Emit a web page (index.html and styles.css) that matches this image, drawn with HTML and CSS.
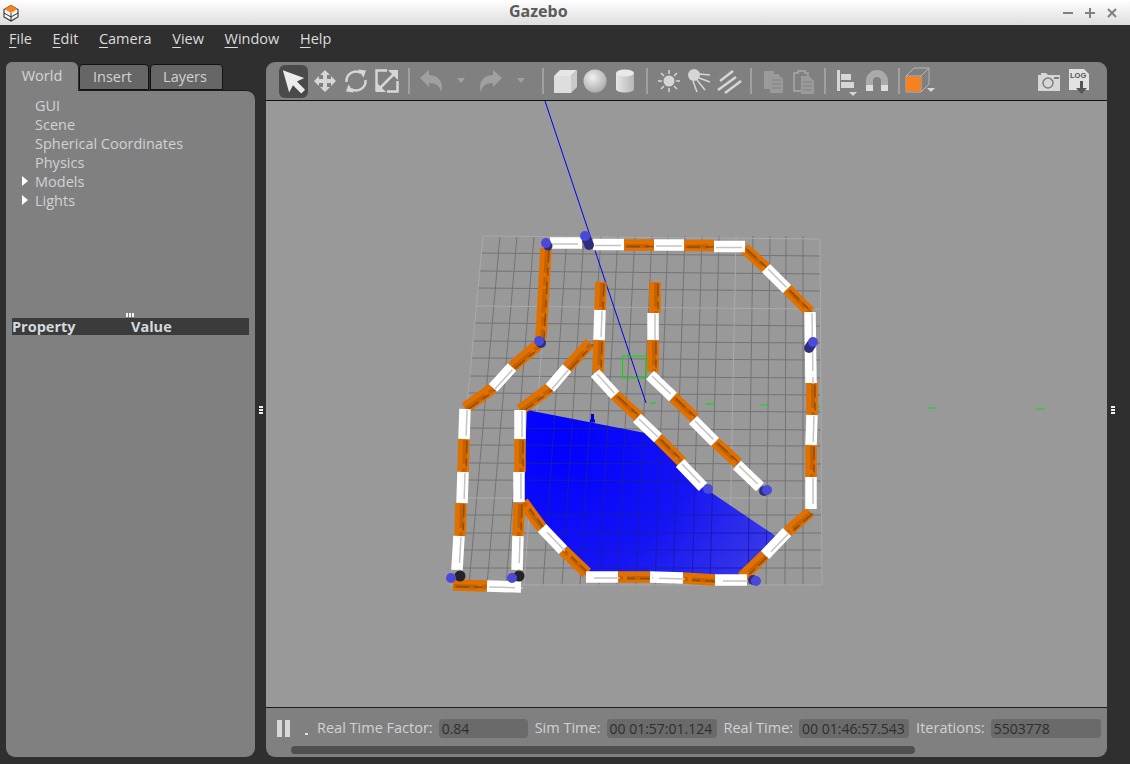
FILE: index.html
```html
<!DOCTYPE html>
<html lang="en">
<head>
  <meta charset="UTF-8">
  <title>Gazebo</title>
  <link rel="stylesheet" href="styles.css">
</head>
<body>

<header class="titlebar">
  <svg class="app-logo" width="18" height="18" viewBox="0 0 18 18">
    <path d="M9 1.5L16 5.5V13L9 17L2 13V5.5Z" fill="#f4f4f4" stroke="#333" stroke-width="1.1"/>
    <path d="M9 1L15.5 5L9 9L2.5 5Z" fill="#f5821f"/>
    <path d="M2 9L9 13L16 9M9 9V17" fill="none" stroke="#333" stroke-width="1"/>
  </svg>
  <span class="app-title">Gazebo</span>
  <div class="win-buttons">
    <svg width="14" height="14" viewBox="0 0 14 14"><path d="M2 7H12" class="win-stroke"/></svg>
    <svg width="14" height="14" viewBox="0 0 14 14"><path d="M2 7H12M7 2V12" class="win-stroke"/></svg>
    <svg width="14" height="14" viewBox="0 0 14 14"><path d="M3 3L11 11M11 3L3 11" class="win-stroke"/></svg>
  </div>
</header>

<nav class="menubar">
  <span class="menu-item"><u>F</u>ile</span>
  <span class="menu-item"><u>E</u>dit</span>
  <span class="menu-item"><u>C</u>amera</span>
  <span class="menu-item"><u>V</u>iew</span>
  <span class="menu-item"><u>W</u>indow</span>
  <span class="menu-item"><u>H</u>elp</span>
</nav>

<main class="workspace">

  <!-- left panel -->
  <section class="side">
    <div class="tabs">
      <div class="tab active">World</div>
      <div class="tab">Insert</div>
      <div class="tab">Layers</div>
    </div>
    <div class="side-body">
      <ul class="tree">
        <li>GUI</li>
        <li>Scene</li>
        <li>Spherical Coordinates</li>
        <li>Physics</li>
        <li class="closed">Models</li>
        <li class="closed">Lights</li>
      </ul>
      <div class="hgrip"><i></i><i></i><i></i></div>
      <div class="prop-head"><span class="prop-name">Property</span><span>Value</span></div>
    </div>
  </section>

  <div class="vsplit"><div class="vgrip"><i></i><i></i><i></i></div></div>

  <!-- main view -->
  <section class="view">
    <div class="toolbar">
      <div class="tool wide selected">
        <svg width="30" height="30" viewBox="0 0 30 30"><path class="ic-bright" d="M4 4L26 12L18.500 15.500L27 24L23 28L14.500 19.500L10.500 27Z"/></svg>
      </div>
      <div class="tool wide">
        <svg width="30" height="30" viewBox="0 0 30 30"><path class="ic" d="M15 4l5 5h-3v4h4v-3l5 5-5 5v-3h-4v4h3l-5 5-5-5h3v-4H9v3l-5-5 5-5v3h4V9h-3z"/></svg>
      </div>
      <div class="tool wide">
        <svg width="30" height="30" viewBox="0 0 30 30"><path class="ic-line" d="M5.500 16A9.500 9.500 0 0 1 20 7M24.500 14A9.500 9.500 0 0 1 10 23"/><path class="ic" d="M17 3.500L25 4.500L22.500 11.500ZM13 26.500L5 25.500L7.500 18.500Z"/></svg>
      </div>
      <div class="tool wide">
        <svg width="30" height="30" viewBox="0 0 30 30"><path class="ic-line" d="M15 4.500H4.500V25.500M15 25.500H25.500V15M8 22L22 8"/><path class="ic" d="M16 4H26V14ZM14 26H4V16Z"/></svg>
      </div>
      <div class="sep"></div>
      <div class="tool">
        <svg width="30" height="30" viewBox="0 0 30 30"><path class="ic-off" d="M4 12L13 4V9C21 9 26 14 26 21C26 23 25.500 24.500 25 26C24 20 20 17 13 17V21Z"/></svg>
      </div>
      <div class="tool"><svg width="10" height="6" viewBox="0 0 10 6"><path class="ic-off" d="M1 0H9L5 5Z"/></svg></div>
      <div class="tool">
        <svg width="30" height="30" viewBox="0 0 30 30"><path class="ic-off" d="M26 12L17 4V9C9 9 4 14 4 21C4 23 4.500 24.500 5 26C6 20 10 17 17 17V21Z"/></svg>
      </div>
      <div class="tool"><svg width="10" height="6" viewBox="0 0 10 6"><path class="ic-off" d="M1 0H9L5 5Z"/></svg></div>
      <div class="sep"></div>
      <div class="tool">
        <svg width="30" height="30" viewBox="0 0 30 30"><path fill="#dedede" d="M4 10H21V27H4Z"/><path fill="#e6e6e6" d="M4 10L10 4H27L21 10Z"/><path fill="#cacaca" d="M21 10L27 4V21L21 27Z"/></svg>
      </div>
      <div class="tool">
        <svg width="30" height="30" viewBox="0 0 30 30">
          <defs><radialGradient id="ball" cx=".4" cy=".35" r=".7"><stop offset="0" stop-color="#f0f0f0"/><stop offset="1" stop-color="#a9a9a9"/></radialGradient></defs>
          <circle cx="15" cy="15" r="11.500" fill="url(#ball)"/>
        </svg>
      </div>
      <div class="tool">
        <svg width="30" height="30" viewBox="0 0 30 30">
          <defs><linearGradient id="can"><stop offset="0" stop-color="#e6e6e6"/><stop offset="1" stop-color="#b6b6b6"/></linearGradient></defs>
          <path fill="url(#can)" d="M6 7V23C6 25 10 26.500 15 26.500S24 25 24 23V7Z"/>
          <ellipse cx="15" cy="7" rx="9" ry="3.500" fill="#e9e9e9"/>
        </svg>
      </div>
      <div class="sep"></div>
      <div class="tool">
        <svg width="30" height="30" viewBox="0 0 30 30"><circle class="ic" cx="15" cy="15" r="5.500"/><path class="ic-thin" d="M15 4V8M15 22V26M4 15H8M22 15H26M7 7L10 10M20 20L23 23M23 7L20 10M10 20L7 23"/></svg>
      </div>
      <div class="tool">
        <svg width="30" height="30" viewBox="0 0 30 30"><circle class="ic" cx="10" cy="9" r="6"/><path class="ic-thin" d="M15 8L26 9M15 12L26 16M13 14L21 24M9 15L13 26"/></svg>
      </div>
      <div class="tool">
        <svg width="30" height="30" viewBox="0 0 30 30"><path class="ic-line" d="M6 15L19 5M4 24L22 11M11 27L27 15"/></svg>
      </div>
      <div class="sep"></div>
      <div class="tool">
        <svg width="30" height="30" viewBox="0 0 30 30"><path class="ic-dim" d="M6 5H16V8H20L25 13V27H12V23H6Z"/><path class="ic-dimline" d="M14 14H23M14 18H23M14 22H23"/></svg>
      </div>
      <div class="tool">
        <svg width="30" height="30" viewBox="0 0 30 30"><path class="ic-dimoutline" d="M6 7H10V5H17V7H20V25H6Z"/><path class="ic-dim" d="M13 10H21L26 15V28H13Z"/><path class="ic-dimline" d="M15 16H24M15 20H24M15 24H24"/></svg>
      </div>
      <div class="sep"></div>
      <div class="tool">
        <svg width="30" height="30" viewBox="0 0 30 30"><path class="ic" d="M5 4H8V25H5ZM9 8H19V14H9ZM9 16H22V22H9Z"/><path class="ic" d="M17 26H25L21 30Z"/></svg>
      </div>
      <div class="tool">
        <svg width="30" height="30" viewBox="0 0 30 30">
          <defs><linearGradient id="mag" x2="0" y2="1"><stop offset="0" stop-color="#aaa"/><stop offset=".7" stop-color="#aaa"/><stop offset=".71" stop-color="#ddd"/><stop offset="1" stop-color="#ddd"/></linearGradient></defs>
          <path fill="url(#mag)" d="M4 25V15A11 11 0 0 1 26 15V25H19V15A4 4 0 0 0 11 15V25Z"/>
        </svg>
      </div>
      <div class="sep"></div>
      <div class="tool colorbox">
        <svg width="34" height="30" viewBox="0 0 34 30">
          <path d="M2 10L10 2H25V18L17 26H2ZM2 10H17V26M17 10L25 2" fill="none" stroke="#b5b5b5" stroke-width="1"/>
          <rect x="2" y="10.500" width="15" height="15" fill="#f5821f"/>
          <path class="ic" d="M23 22H31L27 26Z"/>
        </svg>
      </div>
      <div class="tool-gap"></div>
      <div class="tool">
        <svg width="30" height="30" viewBox="0 0 30 30"><path class="ic" d="M4 9H7V7H12L14 9H26V25H4Z"/><circle cx="14" cy="17" r="5" fill="none" stroke="#7f7f7f" stroke-width="1.500"/><rect x="20" y="11" width="5" height="2" fill="#7f7f7f"/></svg>
      </div>
      <div class="tool">
        <svg width="30" height="30" viewBox="0 0 30 30"><path fill="#e2e2e2" d="M5 3H20L25 8V24H5Z"/><text x="6" y="12" class="log-text">LOG</text><path fill="#555" d="M16 15H19V22H23L17.500 28L12 22H16Z"/></svg>
      </div>
    </div>

    <!-- 3d scene -->
    <div class="scene">
      <svg class="scene-art" viewBox="266 101 841 606" preserveAspectRatio="none">
        <defs>
          <radialGradient id="laser" gradientUnits="userSpaceOnUse" cx="560" cy="440" r="240">
            <stop offset="0" stop-color="#0000ff"/>
            <stop offset=".55" stop-color="#1414f4"/>
            <stop offset="1" stop-color="#3a3ae6"/>
          </radialGradient>
          <clipPath id="laser-clip"><polygon points="527,410 645,433 703,487 777,537 742,577 590,572 523,502"/></clipPath>
          <path id="gridlines" d="M500 236L469 585M517 236L487 585M534 236L506 585M567 236L543 585M584 236L562 585M601 236L580 585M618 236L599 585M635 236L617 585M652 236L636 585M668 236L655 585M685 236L673 585M702 236L692 585M719 236L710 585M753 236L748 585M770 236L766 585M786 236L785 585M803 236L803 585M481 253L820 256M480 271L820 274M478 288L820 291M475 323L820 326M473 341L820 343M471 358L820 360M470 376L820 378M468 393L820 395M466 410L821 412M465 428L821 430M463 445L821 446M461 463L821 464M460 480L821 481M456 515L821 515M455 533L822 533M453 550L822 550M451 568L822 568"/>
          <path id="orange-walls" d="M624 245H654M684 245.500H714M744 248L766 268M787 289L810 312M812 383V415M811 445V477M810 512L787 532M765 555L742 577M715 580L683 578M650 577L618 577M587 573L563 550M542 528L523 502M520 439V472M519 503L518 536M464 439L463 472M461 503L460 536M453 585L487 586M465 408L493 388M512 367L538 345M546 248L541 338M520 410L550 388M567 368L590 343M601 282L600 310M599 340L598 372M615 395L640 418M658 438L682 462M655 282V313M653 340V372M673 397L695 418M715 442L738 463"/>
          <path id="white-walls" d="M550 243H582M593 244.500H624M654 245H684M714 246.500H745M766 268L787 289M810 312L811 383M812 415L811 445M811 477V509M787 532L765 555M747 580L715 580M683 578L650 577M618 577H586M563 550L542 528M520 410V439M519 472V502M518 536L517 570M465 409L464 439M463 472L462 503M459 536L457 570M487 586L521 587M493 388L512 367M550 388L567 368M600 310L599 340M595 373L615 395M637 418L658 438M680 463L703 487M653 313V340M650 375L673 397M693 420L715 442M737 465L760 487"/>
        </defs>

        <rect class="ground" x="266" y="101" width="841" height="606"/>

        <use href="#gridlines" class="grid"/>
        <path class="grid-major" d="M483 236L820 239L822 585L450 585ZM550 236L524 585M736 236L729 585M476 306L820 309M458 498L821 498"/>

        <polygon points="527,410 645,433 703,487 777,537 742,577 590,572 523,502" fill="url(#laser)"/>
        <use href="#gridlines" class="grid-laser" clip-path="url(#laser-clip)"/>

        <path class="laser-line" d="M545 101L646 403"/>
        <path class="marker" d="M622.500 356H646V378H622.500Z"/>
        <path class="marker" d="M650 403H656M705 404H715M760 405H768M815 407H820M927 408H935M1036 409H1045"/>

        <path d="M590 421H595M592.500 414V420" stroke="#0000cc" stroke-width="3"/>

        <use href="#orange-walls" class="wall-orange"/>
        <use href="#orange-walls" class="wall-orange-mid" transform="translate(1 1)"/>
        <use href="#orange-walls" class="wall-orange-dark" transform="translate(3 1.500)"/>
        <use href="#white-walls" class="wall-white"/>
        <use href="#white-walls" class="wall-white-dark" transform="translate(2 1)"/>

        <g class="post-dark">
          <circle cx="460" cy="576" r="5.500"/>
          <circle cx="519" cy="576" r="5.500"/>
        </g>
        <g class="post-shadow">
          <circle cx="548" cy="246" r="4.500"/>
          <circle cx="589" cy="245" r="5"/>
          <circle cx="587" cy="240" r="5"/>
          <circle cx="541" cy="343" r="5"/>
          <circle cx="809" cy="348" r="5"/>
          <circle cx="811" cy="345" r="5"/>
          <circle cx="764" cy="491" r="5"/>
          <circle cx="753" cy="580" r="5"/>
        </g>
        <g class="post">
          <circle cx="546" cy="243" r="5"/>
          <circle cx="585" cy="236" r="5"/>
          <circle cx="539" cy="341" r="5"/>
          <circle cx="813" cy="342" r="5"/>
          <circle cx="708" cy="489" r="5"/>
          <circle cx="767" cy="490" r="5"/>
          <circle cx="756" cy="581" r="5"/>
          <circle cx="451" cy="578" r="5"/>
          <circle cx="512" cy="578" r="5"/>
        </g>
      </svg>
    </div>

    <div class="status">
      <div class="status-row">
        <div class="pause"><i></i><i></i></div>
        <span class="dot"></span>
        <span class="stat-label first">Real Time Factor:</span>
        <span class="stat-field short">0.84</span>
        <span class="stat-label">Sim Time:</span>
        <span class="stat-field">00 01:57:01.124</span>
        <span class="stat-label">Real Time:</span>
        <span class="stat-field">00 01:46:57.543</span>
        <span class="stat-label">Iterations:</span>
        <span class="stat-field">5503778</span>
      </div>
      <div class="scrollbar"></div>
    </div>
  </section>

  <div class="vsplit last"><div class="vgrip"><i></i><i></i><i></i></div></div>
</main>

</body>
</html>
```

FILE: styles.css
```css
* {
  box-sizing: border-box;
}
html, body {
  margin: 0;
  padding: 0;
  width: 1130px;
  height: 764px;
  overflow: hidden;
  background: #2f2f2f;
  font-family: "Open Sans", "Noto Sans", sans-serif;
  font-size: 14px;
}

/* title bar */
.titlebar {
  height: 25px;
  display: flex;
  align-items: center;
  position: relative;
  padding-left: 2px;
  background: linear-gradient(#ffffff, #dedede);
}
.app-title {
  position: absolute;
  left: 509px;
  top: 0;
  font-family: "Noto Sans", sans-serif;
  font-size: 16px;
  font-weight: 700;
  color: #5a5a5a;
}
.win-buttons {
  margin-left: auto;
  display: flex;
  gap: 8px;
  padding-right: 11px;
}
.win-stroke {
  fill: none;
  stroke: #808080;
  stroke-width: 2;
}

/* menu */
.menubar {
  height: 33px;
  display: flex;
  align-items: center;
  padding: 0 0 6px 9px;
  color: #dcdcdc;
  font-size: 14.500px;
}
.menu-item {
  margin-right: 20.600px;
}
.menu-item u {
  text-underline-offset: 3px;
}

.workspace {
  height: 706px;
  display: flex;
  padding: 4px 0 7px 6px;
}

/* left panel */
.side {
  width: 249px;
  display: flex;
  flex-direction: column;
}
.tabs {
  height: 28px;
  display: flex;
  gap: 1px;
  align-items: flex-end;
}
.tab {
  width: 70px;
  height: 26px;
  display: flex;
  align-items: center;
  justify-content: center;
  padding-bottom: 2px;
  padding-right: 3px;
  background: #666666;
  color: #d2d2d2;
  border: 1px solid #111;
  border-radius: 4px 4px 0 0;
  font-size: 14.500px;
}
.tab:nth-child(3) {
  width: 73px;
}
.tab.active {
  width: 72px;
  height: 29px;
  margin-bottom: -1px;
  padding: 0 0 3px;
  background: #808080;
  border: 0;
  border-radius: 6px 6px 0 0;
  color: #d6d6d6;
  position: relative;
}
.side-body {
  flex: 1;
  background: #808080;
  border-radius: 0 9px 9px 9px;
  border-top: 1px solid #1c1c1c;
  padding-top: 5px;
  display: flex;
  flex-direction: column;
}
.tree {
  list-style: none;
  margin: 0;
  padding: 0 0 0 29px;
  height: 217px;
  color: #cfd3d6;
  font-size: 14.500px;
}
.tree li {
  height: 19px;
  line-height: 19px;
  position: relative;
}
.tree li.closed::before {
  content: "";
  position: absolute;
  left: -13px;
  top: 4px;
  border-left: 6px solid #fff;
  border-top: 5.500px solid transparent;
  border-bottom: 5.500px solid transparent;
}
.hgrip {
  display: flex;
  gap: 1px;
  justify-content: center;
  height: 4px;
  padding-right: 2px;
}
.hgrip i {
  width: 2px;
  height: 4px;
  background: #f2f2f2;
}
.prop-head {
  margin: 1px 6px 0;
  height: 17px;
  line-height: 17px;
  display: flex;
  background: #3b3b3b;
  color: #d4dade;
  font-weight: 700;
  font-size: 14.500px;
}
.prop-name {
  width: 119px;
}

/* splitters */
.vsplit {
  width: 11px;
  display: flex;
  align-items: center;
  justify-content: center;
}
.vgrip {
  display: flex;
  flex-direction: column;
  gap: 1px;
}
.vgrip i {
  width: 4px;
  height: 2px;
  background: #f2f2f2;
}

/* main view */
.view {
  width: 841px;
  display: flex;
  flex-direction: column;
  background: #808080;
  border-radius: 9px;
  overflow: hidden;
}
.toolbar {
  height: 39px;
  flex: none;
  display: flex;
  align-items: center;
  padding: 0 13px 0 12px;
  border-bottom: 1px solid #111;
}
.tool {
  width: 30px;
  height: 34px;
  flex: none;
  display: flex;
  align-items: center;
  justify-content: center;
}
.tool.wide {
  width: 31px;
}
.tool.colorbox {
  width: 34px;
  margin-left: -2px;
}
.tool.selected {
  width: 29px;
  height: 33px;
  margin: 0 1px;
  background: #4a4a4a;
  border-radius: 6px;
}
.tool-gap {
  flex: 1;
}
.sep {
  width: 14px;
  height: 26px;
  flex: none;
  display: flex;
  justify-content: center;
}
.sep::before {
  content: "";
  width: 2px;
  background: #a0a0a0;
}
.ic { fill: #d6d6d6; }
.ic-bright { fill: #ececec; }
.ic-off { fill: #a0a0a0; }
.ic-dim { fill: #9a9a9a; }
.ic-line {
  fill: none;
  stroke: #d6d6d6;
  stroke-width: 2.500;
}
.ic-thin {
  fill: none;
  stroke: #d6d6d6;
  stroke-width: 1.500;
}
.ic-dimline {
  fill: none;
  stroke: #808080;
  stroke-width: 1;
}
.ic-dimoutline {
  fill: none;
  stroke: #a8a8a8;
  stroke-width: 1.500;
}
.log-text {
  font-family: "Liberation Sans", sans-serif;
  font-size: 7.500px;
  font-weight: 700;
  fill: #555;
}

/* scene */
.scene {
  flex: 1;
  min-height: 0;
  background: #999999;
}
.scene-art {
  display: block;
  width: 100%;
  height: 100%;
}
.ground { fill: #999999; }
.grid {
  fill: none;
  stroke: #747474;
  stroke-width: 1;
}
.grid-laser {
  fill: none;
  stroke: #1a1ab4;
  stroke-width: 1;
}
.grid-major {
  fill: none;
  stroke: #aaaaaa;
  stroke-width: 1;
}
.laser-line {
  stroke: #0000ee;
  stroke-width: 1;
}
.marker {
  fill: none;
  stroke: #00e000;
  stroke-width: 1;
}
.wall-orange {
  fill: none;
  stroke: #e07000;
  stroke-width: 11.500;
}
.wall-orange-mid {
  fill: none;
  stroke: #c46200;
  stroke-width: 4;
  stroke-dasharray: 24 4 9 3;
}
.wall-orange-dark {
  fill: none;
  stroke: #8c4c08;
  stroke-width: 1.500;
  stroke-dasharray: 13 5 8 6;
}
.wall-white {
  fill: none;
  stroke: #ffffff;
  stroke-width: 11.500;
}
.wall-white-dark {
  fill: none;
  stroke: #c4c4c4;
  stroke-width: 1.500;
  stroke-dasharray: 26 6;
}
.post { fill: #4a4ada; }
.post-shadow { fill: #2e2e80; }
.post-dark { fill: #242428; }

/* status bar */
.status {
  height: 50px;
  flex: none;
  border-top: 1px solid #1c1c1c;
  padding-top: 10px;
}
.status-row {
  height: 20px;
  display: flex;
  align-items: center;
  padding-left: 11px;
  color: #d2d2d2;
  font-size: 14.500px;
  line-height: 18px;
}
.pause {
  width: 13px;
  height: 17px;
  display: flex;
  justify-content: space-between;
}
.pause i {
  width: 5px;
  background: #d8d8d8;
}
.dot {
  width: 3px;
  height: 2px;
  margin: 12px 0 0 15px;
  background: #e0e0e0;
}
.stat-label {
  margin: 0 6px 0 7px;
}
.stat-label.first {
  margin-left: 9px;
}
.stat-field {
  width: 110px;
  height: 19px;
  line-height: 19px;
  padding-left: 3px;
  background: #6a6a6a;
  border-radius: 4px;
  color: #2e2e2e;
  font-size: 14px;
  white-space: nowrap;
}
.stat-field.short {
  width: 89px;
}
.scrollbar {
  width: 624px;
  height: 8px;
  margin: 8px 0 0 25px;
  background: #4f4f4f;
  border-radius: 4px;
}
```
